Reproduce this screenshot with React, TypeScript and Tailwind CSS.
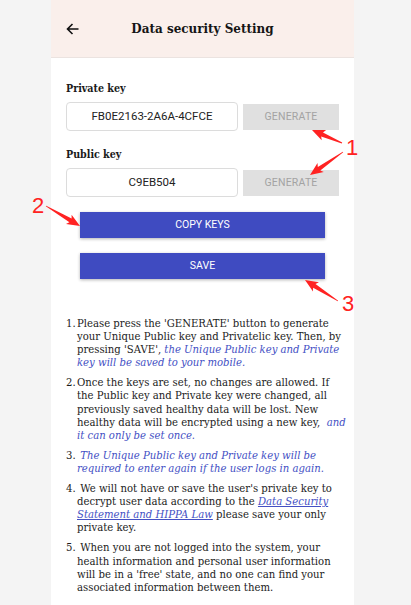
import React from 'react';

const serif = { fontFamily: '"DejaVu Serif", "Liberation Serif", serif' };
const serifBold = { fontFamily: '"DejaVu Serif Condensed", "DejaVu Serif", serif', fontStretch: 'condensed' };

type Pt = [number, number];

// tapered annotation arrow, thin at the tail and with a wide head at the tip
function arrowPoints(tail: Pt, tip: Pt) {
  const dx = tip[0] - tail[0];
  const dy = tip[1] - tail[1];
  const len = Math.hypot(dx, dy);
  const ux = dx / len;
  const uy = dy / len;
  const nx = -uy;
  const ny = ux;
  const headLen = 11;
  const headW = 5.5;
  const neckW = 2.2;
  const bx = tip[0] - ux * headLen;
  const by = tip[1] - uy * headLen;
  const pts: Pt[] = [
    [tail[0] + nx * 0.4, tail[1] + ny * 0.4],
    [bx + nx * neckW, by + ny * neckW],
    [bx + nx * headW - ux * 2, by + ny * headW - uy * 2],
    tip,
    [bx - nx * headW - ux * 2, by - ny * headW - uy * 2],
    [bx - nx * neckW, by - ny * neckW],
    [tail[0] - nx * 0.4, tail[1] - ny * 0.4],
  ];
  return pts.map((p) => `${p[0].toFixed(1)},${p[1].toFixed(1)}`).join(' ');
}

function Annotations() {
  const arrows: [Pt, Pt][] = [
    [[342, 143], [312, 130]],
    [[343, 152], [310, 175]],
    [[46, 206], [80, 226]],
    [[338, 301], [305, 280]],
  ];
  return (
    <svg className="absolute left-0 top-0 pointer-events-none" width="411" height="605">
      {arrows.map((a, i) => (
        <polygon key={i} points={arrowPoints(a[0], a[1])} fill="#ff2222" />
      ))}
      <g fill="#ff2222" fontFamily="Liberation Sans, Arial, sans-serif" fontSize="22" textAnchor="middle">
        <text x="352" y="155">1</text>
        <text x="38" y="213">2</text>
        <text x="348" y="311">3</text>
      </g>
    </svg>
  );
}

function KeyRow({ label, value }: { label: string; value: string }) {
  return (
    <div>
      <div className="text-[10.6px] font-bold leading-[16px] text-[#1a1a1a]" style={serifBold}>
        {label}
      </div>
      <div className="mt-[6px] flex items-center gap-[5px]">
        <div className="w-[172px] h-[29px] rounded-[4px] border border-[#dcdcdc] flex items-center justify-center text-[11.5px] text-[#222] font-['Roboto',sans-serif]">
          {value}
        </div>
        <div className="w-[96px] h-[26px] bg-[#e0e0e0] flex items-center justify-center text-[10.5px] text-[#a3a3a3] font-['Roboto',sans-serif] tracking-[0.2px]">
          GENERATE
        </div>
      </div>
    </div>
  );
}

const Blue = ({ children }: { children: React.ReactNode }) => (
  <span className="italic text-[#4450c4]">{children}</span>
);

const items: React.ReactNode[] = [
  <>
    Please press the 'GENERATE' button to generate<br />
    your Unique Public key and Privatelic key. Then, by<br />
    pressing 'SAVE', <Blue>the Unique Public key and Private</Blue><br />
    <Blue>key will be saved to your mobile.</Blue>
  </>,
  <>
    Once the keys are set, no changes are allowed. If<br />
    the Public key and Private key were changed, all<br />
    previously saved healthy data will be lost. New<br />
    healthy data will be encrypted using a new key,&nbsp; <Blue>and</Blue><br />
    <Blue>it can only be set once.</Blue>
  </>,
  <>
    &nbsp;<Blue>The Unique Public key and Private key will be</Blue><br />
    <Blue>required to enter again if the user logs in again.</Blue>
  </>,
  <>
    &nbsp;We will not have or save the user's private key to<br />
    decrypt user data according to the <Blue><span className="underline">Data Security</span></Blue><br />
    <Blue><span className="underline">Statement and HIPPA Law</span></Blue> please save your only<br />
    private key.
  </>,
  <>
    &nbsp;When you are not logged into the system, your<br />
    health information and personal user information<br />
    will be in a 'free' state, and no one can find your<br />
    associated information between them.
  </>,
];

export default function App() {
  return (
    <div className="relative min-h-screen h-[605px] overflow-hidden bg-[#f4f4f4] pl-[51px]">
      <div className="w-[303px] h-full bg-white">
        {/* Header */}
        <div className="h-[58px] bg-[#faefeb] border-b border-[#ebe3e0] flex items-center px-[15px]">
          <svg width="13" height="12" viewBox="0 0 13 12" fill="none" stroke="#111" strokeWidth="1.6">
            <path d="M12.5 6H1.5M6.5 1L1.5 6l5 5" />
          </svg>
          <div className="flex-1 text-center text-[13.3px] font-bold text-[#151515] pr-[13px] pt-[1px]" style={serifBold}>
            Data security Setting
          </div>
        </div>

        <div className="px-[15px] pt-[22px]">
          <KeyRow label="Private key" value="FB0E2163-2A6A-4CFCE" />
          <div className="h-[15px]" />
          <KeyRow label="Public key" value="C9EB504" />

          <div className="mx-[14px] mt-[15px] flex flex-col gap-[15px]">
            <button className="h-[26px] bg-[#3f4bc1] text-white text-[10.5px] font-['Roboto',sans-serif] shadow-[0_1px_3px_rgba(0,0,0,0.3)]">
              COPY KEYS
            </button>
            <button className="h-[26px] bg-[#3f4bc1] text-white text-[10.5px] font-['Roboto',sans-serif] shadow-[0_1px_3px_rgba(0,0,0,0.3)]">
              SAVE
            </button>
          </div>

          <ol className="mt-[38px] flex flex-col gap-[7px] text-[10.1px] leading-[13.1px] text-[#1c1c1c]" style={serif}>
            {items.map((it, i) => (
              <li key={i} className="flex">
                <span className="w-[11px] shrink-0">{i + 1}.</span>
                <span className="whitespace-nowrap">{it}</span>
              </li>
            ))}
          </ol>
        </div>
      </div>
      <Annotations />
    </div>
  );
}
